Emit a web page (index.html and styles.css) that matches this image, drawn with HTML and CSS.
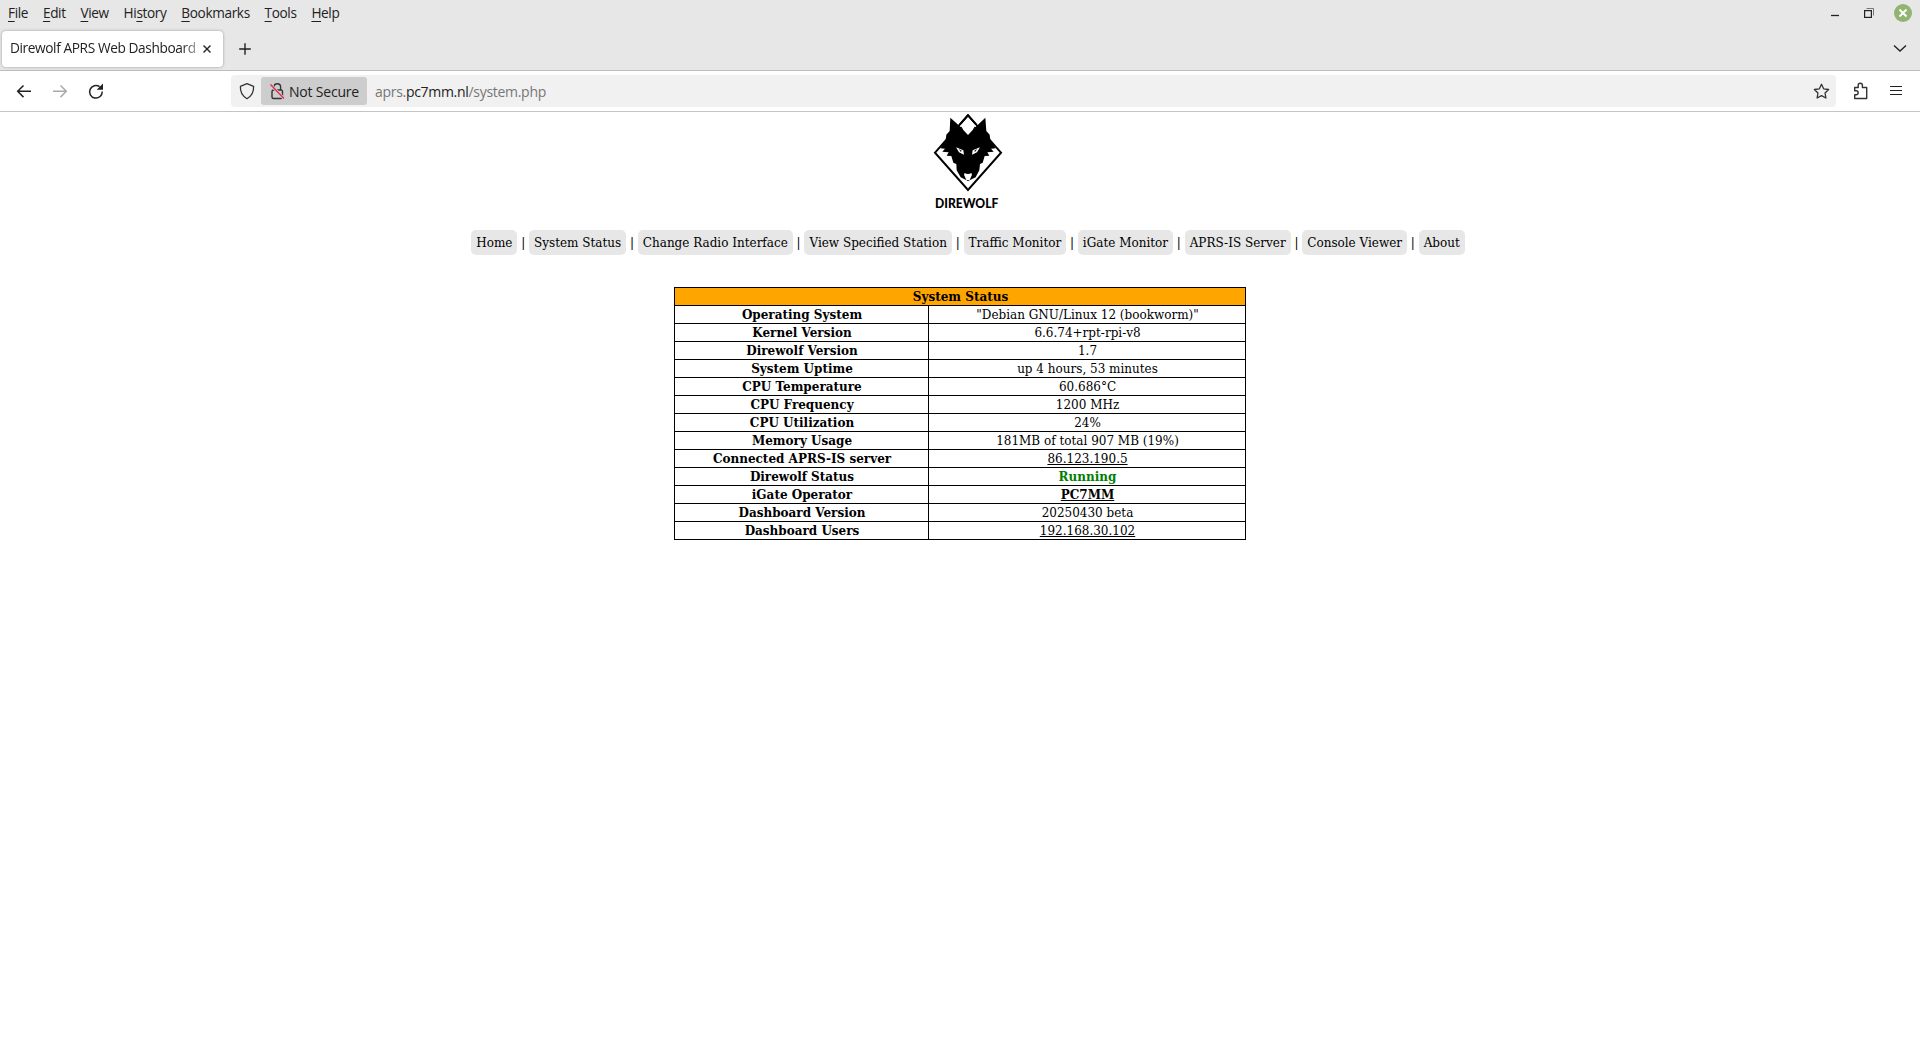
FILE: index.html
```html
<!DOCTYPE html>
<html lang="en">
<head>
<meta charset="utf-8">
<title>Direwolf APRS Web Dashboard</title>
<link rel="stylesheet" href="styles.css">
</head>
<body>
<header class="browser">
  <div class="menubar">
    <nav class="menus">
      <span><u>F</u>ile</span><span><u>E</u>dit</span><span><u>V</u>iew</span><span>Hi<u>s</u>tory</span><span><u>B</u>ookmarks</span><span><u>T</u>ools</span><span><u>H</u>elp</span>
    </nav>
    <svg class="window-buttons" width="100" height="28" viewBox="0 0 100 28">
      <path d="M11 15.500h8" stroke="#222" stroke-width="1.300"/>
      <path d="M46.500 8.500h7v7" fill="none" stroke="#777"/>
      <rect x="44.600" y="10.600" width="6.800" height="6.800" fill="#e7e7e7" stroke="#222" stroke-width="1.200"/>
      <circle cx="83" cy="13" r="9" fill="#92b372"/>
      <path d="M79.500 9.500l7 7M86.500 9.500l-7 7" stroke="#fff" stroke-width="1.900"/>
    </svg>
  </div>
  <div class="tabs">
    <div class="tab">
      <span class="tab-title">Direwolf APRS Web Dashboard</span>
      <svg width="10" height="10" viewBox="0 0 10 10"><path d="M1.500 1.500l7 7M8.500 1.500l-7 7" stroke="#222" stroke-width="1.400"/></svg>
    </div>
    <svg class="new-tab" width="12" height="12" viewBox="0 0 12 12"><path d="M6 .2v11.600M.2 6h11.600" stroke="#222" stroke-width="1.400"/></svg>
    <svg class="all-tabs" width="14" height="9" viewBox="0 0 14 9"><path d="M1 1.500l6 5.500 6-5.500" fill="none" stroke="#222" stroke-width="1.400"/></svg>
  </div>
  <div class="toolbar">
    <svg class="history-buttons" width="110" height="40" viewBox="0 0 110 40">
      <path d="M31 20.300H17.700M23.500 14.500l-5.800 5.800 5.800 5.800" fill="none" stroke="#222" stroke-width="1.500"/>
      <path d="M53 20.300h13.300M60.500 14.500l5.800 5.800-5.800 5.800" fill="none" stroke="#aaa" stroke-width="1.500"/>
      <path d="M99.600 15.700A6.300 6.300 0 1 0 102.200 20.500" fill="none" stroke="#222" stroke-width="1.500"/>
      <path d="M103 12.500v6.300h-6.300z" fill="#222"/>
    </svg>
    <div class="urlbar">
      <svg class="shield" width="30" height="32" viewBox="0 0 30 32"><path d="M16 8.700l6.600 2.700c.3 5.500-1.600 9.500-6.600 12.300-5-2.800-6.900-6.800-6.600-12.300z" fill="none" stroke="#333" stroke-width="1.300" stroke-linejoin="round"/></svg>
      <div class="identity">
        <svg width="16" height="18" viewBox="0 0 16 18">
          <rect x="3" y="8" width="10.500" height="8.500" rx="1.500" fill="none" stroke="#333" stroke-width="1.400"/>
          <path d="M5 8V5a3.300 3.300 0 0 1 6.600 0v3" fill="none" stroke="#333" stroke-width="1.400"/>
          <path d="M1.500 2.500L15 16.500" stroke="#cdcdcd" stroke-width="3"/>
          <path d="M1.500 2.500L15 16.500" stroke="#e22850" stroke-width="1.300"/>
        </svg>
        <span class="secure-label">Not Secure</span>
      </div>
      <span class="url">aprs.<b>pc7mm.nl</b>/system.php</span>
      <svg class="star" width="17" height="17" viewBox="0 0 17 17"><path d="M8.500 1.300l2.150 4.500 5 .7-3.600 3.500.85 5-4.400-2.400-4.400 2.400.85-5-3.600-3.500 5-.7z" fill="none" stroke="#333" stroke-width="1.300" stroke-linejoin="round"/></svg>
    </div>
    <svg class="toolbar-end" width="84" height="40" viewBox="0 0 84 40">
      <path d="M18.700 16.500h3.500V14.400a2.100 2.100 0 0 1 4.200 0v2.100h4.300v11H18.700v-3.700h1.400a2.050 2.050 0 0 0 0-4.100h-1.400z" fill="none" stroke="#333" stroke-width="1.400" stroke-linejoin="round"/>
      <path d="M54 15.500h12M54 19.500h12M54 23.500h12" stroke="#222" stroke-width="1.200"/>
    </svg>
  </div>
</header>
<main>
  <div class="masthead">
    <svg class="logo" width="96" height="104" viewBox="0 18 288 312">
      <path d="M144 28L243 140 144 252 45 140z" fill="#fff" stroke="#000" stroke-width="6"/>
      <path d="M91 35L122 63Q144 56 167 63L196 35 199 75 209 86 211 103 227 127 213 128 221 137 202 139 208 149 194 150 188 170 180 174 178 193 167 214 144 225 122 214 110 193 109 174 100 170 94 150 80 149 86 139 67 137 75 128 61 127 77 103 79 86 89 75z" fill="#000"/>
      <path d="M144 32L122 58 130 72 144 87 158 72 166 58z" fill="#fff"/>
      <path d="M120 55L144 28 168 55" fill="none" stroke="#000" stroke-width="6"/>
      <path d="M108 124L130 133 132 146 117 139zM180 124L158 133 156 146 171 139z" fill="#fff"/>
      <path d="M116 129l9 5-2 4zM172 129l-9 5 2 4z" fill="#000"/>
      <path d="M134 201Q144 207 154 201L156 206 149 222H139L132 206z" fill="#fff"/>
      <text class="logo-name" x="45" y="306" textLength="190" lengthAdjust="spacingAndGlyphs">DIREWOLF</text>
    </svg>
    <nav class="site-nav"><a>Home</a>|<a>System Status</a>|<a>Change Radio Interface</a>|<a>View Specified Station</a>|<a>Traffic Monitor</a>|<a>iGate Monitor</a>|<a>APRS-IS Server</a>|<a>Console Viewer</a>|<a>About</a></nav>
  </div>
  <table class="status">
    <colgroup><col class="name-col"><col></colgroup>
    <tr><th class="title" colspan="2">System Status</th></tr>
    <tr><th>Operating System</th><td>"Debian GNU/Linux 12 (bookworm)"</td></tr>
    <tr><th>Kernel Version</th><td>6.6.74+rpt-rpi-v8</td></tr>
    <tr><th>Direwolf Version</th><td>1.7</td></tr>
    <tr><th>System Uptime</th><td>up 4 hours, 53 minutes</td></tr>
    <tr><th>CPU Temperature</th><td>60.686°C</td></tr>
    <tr><th>CPU Frequency</th><td>1200 MHz</td></tr>
    <tr><th>CPU Utilization</th><td>24%</td></tr>
    <tr><th>Memory Usage</th><td>181MB of total 907 MB (19%)</td></tr>
    <tr><th>Connected APRS-IS server</th><td><u>86.123.190.5</u></td></tr>
    <tr><th>Direwolf Status</th><td class="running">Running</td></tr>
    <tr><th>iGate Operator</th><td><u><b>PC7MM</b></u></td></tr>
    <tr><th>Dashboard Version</th><td>20250430 beta</td></tr>
    <tr><th>Dashboard Users</th><td><u>192.168.30.102</u></td></tr>
  </table>
</main>
</body>
</html>
```
FILE: styles.css
```css
* { box-sizing: border-box; }
body { margin: 0; background: #fff; color: #000; }
svg { display: block; flex: none; }
.browser { font-family: "Open Sans", "Noto Sans", sans-serif; font-size: 14px; color: #222; }
.menubar { display: flex; justify-content: space-between; height: 28px; background: #e7e7e7; }
.menus { display: flex; gap: 14.800px; padding-left: 8px; line-height: 25px; font-size: 13.600px; letter-spacing: -.35px; white-space: nowrap; }
.menus u { text-underline-offset: 3px; text-decoration-thickness: 1px; text-decoration-skip-ink: none; }
.tabs { display: flex; align-items: center; height: 43px; padding: 0 13px 1px 2px; background: #e7e7e7; border-bottom: 1px solid #bdbdbd; }
.tab { display: flex; align-items: center; justify-content: space-between; width: 221px; height: 36px; padding: 0 11px 0 8px; background: #fff; border-radius: 4px; box-shadow: 0 0 3px #999; }
.tab-title { width: 189px; padding-bottom: 2px; white-space: nowrap; font-size: 13.700px; letter-spacing: -.4px; -webkit-mask-image: linear-gradient(to right, #000 91%, #0006 99%); mask-image: linear-gradient(to right, #000 91%, #0006 99%); }
.new-tab { margin-left: 16px; }
.all-tabs { margin-left: auto; }
.toolbar { display: flex; align-items: center; height: 41px; border-bottom: 1px solid #c4c4c4; }
.history-buttons { margin-right: 121px; }
.urlbar { display: flex; align-items: center; flex: 1; height: 32px; padding-right: 6px; background: #f1f1f1; border-radius: 4px; }
.identity { display: flex; align-items: center; gap: 4px; width: 106px; height: 28px; padding-left: 8px; background: #cdcdcd; border-radius: 3px; white-space: nowrap; }
.secure-label { letter-spacing: -.2px; }
.url { margin-left: 8px; color: #777; letter-spacing: -.3px; white-space: nowrap; }
.url b { font-weight: 400; color: #222; }
.star { margin-left: auto; }
main { font-family: "DejaVu Serif", serif; font-size: 12px; }
.masthead { display: flex; flex-direction: column; align-items: center; padding-left: 16px; }
.logo-name { font: 900 40px Lato, sans-serif; }
.site-nav { display: flex; align-items: center; gap: 3.800px; margin-top: 14px; height: 25px; white-space: nowrap; }
.site-nav a { padding: 1px 5px 0; line-height: 24px; background: #e7e7e7; border-radius: 5px; }
.status { width: 572px; margin: 32px auto 0; table-layout: fixed; border-collapse: collapse; text-align: center; }
.name-col { width: 254px; }
.status th, .status td { height: 18px; padding: 1px 0 0 1px; border: 1px solid #000; line-height: 16px; }
.status .title { background: #ffa500; }
.status .running { color: #008000; font-weight: 700; }
```
